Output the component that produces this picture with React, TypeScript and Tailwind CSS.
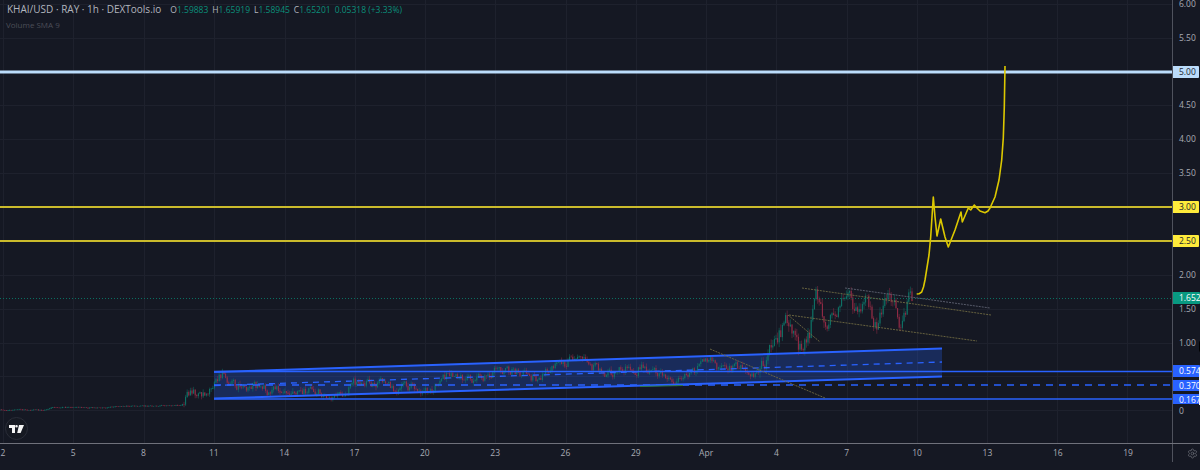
import React from "react";
import { Settings } from "lucide-react";

const yellow: [number, number][] = [[916.7,294],[919,293.8],[921.7,292],[923.5,287],[925,280],[929,255],[930.7,237],[933.3,197],[935,217],[937,236],[940.7,219],[945,237],[948.3,247],[955,230],[961,212],[962.3,222],[968.3,208],[970.7,210],[974.3,205],[977,208],[980,211],[985,212.7],[988,211],[990,208],[995,197],[999,180],[1001.7,160],[1003.3,138],[1004.3,107],[1005,66]];

const pricePath: [number, number][] = [[0,410],[45,410],[55,407],[100,408],[125,406],[160,406],[183,405],[190,397],[200,394],[214,384],[225,375],[240,385],[260,385],[270,390],[300,387],[340,395],[355,384],[385,383],[400,390],[440,386],[450,375],[480,379],[500,370],[520,372],[540,378],[570,361],[600,369],[610,372],[640,367],[650,369],[677,384],[690,372],[700,368],[710,358],[720,368],[740,368],[760,372],[767,357],[780,337],[788,318],[795,335],[805,352],[812,330],[815,305],[820,295],[825,315],[835,320],[845,293],[855,305],[860,300],[870,300],[875,315],[880,325],[885,310],[890,300],[895,308],[900,322],[905,322],[910,304],[913,299]];

function at(x: number) {
  for (let i = 1; i < pricePath.length; i++) {
    const [a, b] = pricePath[i - 1];
    const [c, d] = pricePath[i];
    if (x <= c) return b + ((d - b) * (x - a)) / (c - a);
  }
  return 299;
}

let seed = 12345;
const rnd = () => {
  seed = (seed * 1664525 + 1013904223) % 4294967296;
  return seed / 4294967296;
};

type Candle = { x: number; o: number; c: number; h: number; l: number };
const candles: Candle[] = [];
let noise = 0;
let prev = at(0);
for (let x = 0; x < 913; x += 1.6) {
  const amp = x < 183 ? 0.9 : x < 214 ? 9 : x < 760 ? 8 : 15;
  noise = 0.55 * noise + (rnd() - 0.5) * 1.1;
  const o = prev;
  const c = at(x + 1.6) + noise * amp;
  prev = c;
  const w = x < 183 ? 0.6 : x < 760 ? 3.5 : 6;
  candles.push({ x, o, c, h: Math.min(o, c) - rnd() * w, l: Math.max(o, c) + rnd() * w });
}

const priceLabels = [
  { t: "6.00", y: 4 },
  { t: "5.50", y: 38 },
  { t: "4.50", y: 105 },
  { t: "4.00", y: 139 },
  { t: "3.50", y: 173 },
  { t: "2.00", y: 275 },
  { t: "1.50", y: 309 },
  { t: "1.00", y: 343 },
  { t: "0", y: 411 },
];

const tags = [
  { t: "5.00", y: 72, h: 12, c: "w-[26px] bg-[#bbdcfb] text-[#20242f]" },
  { t: "3.00", y: 207, h: 12, c: "w-[26px] bg-[#ffeb3b] text-[#20242f]" },
  { t: "2.50", y: 241, h: 12, c: "w-[26px] bg-[#ffeb3b] text-[#20242f]" },
  { t: "1.6520", y: 298, h: 12, c: "w-[27px] bg-[#089981] text-white" },
  { t: "0.574", y: 371, h: 12, c: "w-[27px] bg-[#2962ff] text-white" },
  { t: "0.370", y: 385, h: 11, c: "w-[27px] bg-[#2962ff] text-white" },
  { t: "0.167", y: 399, h: 10, c: "w-[27px] bg-[#2962ff] text-white" },
];

const ticks = ["5", "8", "11", "14", "17", "20", "23", "26", "29", "Apr", "4", "7", "10", "13", "16", "19"];

export default function App() {
  const yellowPts = yellow.map((p) => p.join(",")).join(" ");
  return (
    <div className="relative flex h-[470px] w-[1200px] flex-col overflow-hidden bg-[#151823] font-['Open_Sans','Noto_Sans',sans-serif] text-[8.5px] font-medium text-[#a9acb5]">
      <div className="flex h-[444px] border-b border-[#6f717b]">
        <div className="relative w-[1172px] shrink-0">
          <svg width="1172" height="443" className="block">
            <g stroke="#1e212d" strokeWidth="1">
              {[4, 38, 72, 105, 139, 173, 207, 241, 275, 309, 343, 376, 410].map((y) => (
                <line key={y} x1="0" x2="1172" y1={y + 0.5} y2={y + 0.5} />
              ))}
              {[3, 73, 144, 214, 285, 355, 425, 495, 566, 636, 706, 776, 847, 917, 987, 1057, 1127].map((x) => (
                <line key={x} x1={x + 0.5} x2={x + 0.5} y1="0" y2="443" />
              ))}
            </g>

            <polygon points="214,372 942,348.5 942,376.5 214,398.5" fill="#2962ff" fillOpacity="0.25" />

            <g>
              {candles.map((k, i) => {
                const up = k.c < k.o;
                const col = up ? "#0e7568" : "#962c47";
                return (
                  <g key={i} stroke={col}>
                    <line x1={k.x} x2={k.x} y1={k.h} y2={k.l} strokeWidth="0.5" />
                    <line x1={k.x} x2={k.x} y1={Math.min(k.o, k.c)} y2={Math.max(k.o, k.c) + 0.4} strokeWidth="1" />
                  </g>
                );
              })}
            </g>

            <line x1="0" x2="1172" y1="298.5" y2="298.5" stroke="#0a6f61" strokeWidth="1" strokeDasharray="1 2" />

            <g stroke="#2962ff" fill="none">
              <line x1="214" y1="372" x2="942" y2="348.5" strokeWidth="2" />
              <line x1="214" y1="398.5" x2="942" y2="376.5" strokeWidth="2" />
              <line x1="214" y1="385.5" x2="942" y2="362" strokeWidth="1.3" strokeDasharray="6 5" />
              <line x1="214" y1="371.5" x2="1172" y2="371.5" strokeWidth="1.6" />
              <line x1="214" y1="385" x2="1172" y2="385" strokeWidth="1.6" strokeDasharray="7 6" />
              <line x1="214" y1="399" x2="1172" y2="399" strokeWidth="1.6" />
            </g>
            <line x1="640" y1="386.5" x2="683" y2="385.5" stroke="#2d7a45" strokeWidth="1" />

            <g stroke="#6f6a42" strokeWidth="0.9" strokeDasharray="2 1" fill="none">
              <line x1="802" y1="288" x2="991" y2="315" />
              <line x1="789" y1="315" x2="977" y2="341" />
              <line x1="788" y1="315" x2="820" y2="342" />
              <line x1="710" y1="349" x2="825" y2="398" />
            </g>
            <line x1="845" y1="288" x2="990" y2="308" stroke="#5f6272" strokeWidth="0.9" strokeDasharray="2 1" />

            <line x1="0" x2="1172" y1="72" y2="72" stroke="#bbdcfb" strokeWidth="3" />
            <line x1="0" x2="1172" y1="207" y2="207" stroke="#cbbb2c" strokeWidth="2" />
            <line x1="0" x2="1172" y1="241" y2="241" stroke="#cbbb2c" strokeWidth="2" />

            <polyline points={yellowPts} fill="none" stroke="#dcc800" strokeWidth="1.6" strokeLinejoin="round" />
          </svg>

          <div className="absolute left-[7px] top-[2px] flex items-baseline">
            <span className="text-[10px] leading-[14px] text-[#b2b5be]">KHAI/USD · RAY · 1h · DEXTools.io</span>
            <span className="ml-[9px] flex gap-[4px] text-[8.5px] text-[#0b8f7a]">
              <span><span className="text-[#b2b5be]">O</span>1.59883</span>
              <span><span className="text-[#b2b5be]">H</span>1.65919</span>
              <span><span className="text-[#b2b5be]">L</span>1.58945</span>
              <span><span className="text-[#b2b5be]">C</span>1.65201</span>
              <span>0.05318 (+3.33%)</span>
            </span>
          </div>
          <div className="absolute left-[6px] top-[19px] text-[8px] leading-[12px] text-[#4c4e58]">Volume SMA 9</div>

          <div className="absolute left-[5px] top-[417px] flex h-[23px] w-[23px] items-center justify-center rounded-full border border-[#2a2d38] bg-[#161922]">
            <svg width="15" height="8" viewBox="0 0 15 8" fill="#f5f5f5">
              <path d="M0 0h6v8H3V3H0zM7.5 0a1.3 1.3 0 1 1 0 2.6a1.3 1.3 0 1 1 0-2.6zM10 0h5l-3.4 8H8.2z" />
            </svg>
          </div>
        </div>

        <div className="relative flex-1 border-l border-[#4f525d]">
          {priceLabels.map((p) => (
            <span key={p.t} className="absolute left-[6px] leading-[12px]" style={{ top: p.y - 6 }}>
              {p.t}
            </span>
          ))}
          {tags.map((p) => (
            <span
              key={p.t}
              className={`absolute left-0 overflow-hidden whitespace-nowrap rounded-r-[1px] pl-[6px] leading-[11px] ${p.c}`}
              style={{ top: p.y - p.h / 2, height: p.h }}
            >
              {p.t}
            </span>
          ))}
          <span className="absolute right-0 top-[368px] h-[37px] w-[1.5px] bg-[#eef1f6]" />
          <span className="absolute right-[-6px] top-[340px] h-[13px] w-[7px] rounded-full bg-black" />
        </div>
      </div>

      <div className="flex h-[18px]">
        <div className="flex w-[1172px] shrink-0 items-center">
          <span className="w-[6px] shrink-0 text-center leading-[18px]">2</span>
          <div className="ml-[32px] flex">
            {ticks.map((t, i) => (
              <span key={i} className="w-[70.33px] text-center leading-[18px]">
                {t}
              </span>
            ))}
          </div>
        </div>
        <div className="flex flex-1 items-center justify-end border-l border-[#4f525d] pr-[2px]">
          <Settings size={11} strokeWidth={1.5} className="text-[#6f717b]" />
        </div>
      </div>
    </div>
  );
}
